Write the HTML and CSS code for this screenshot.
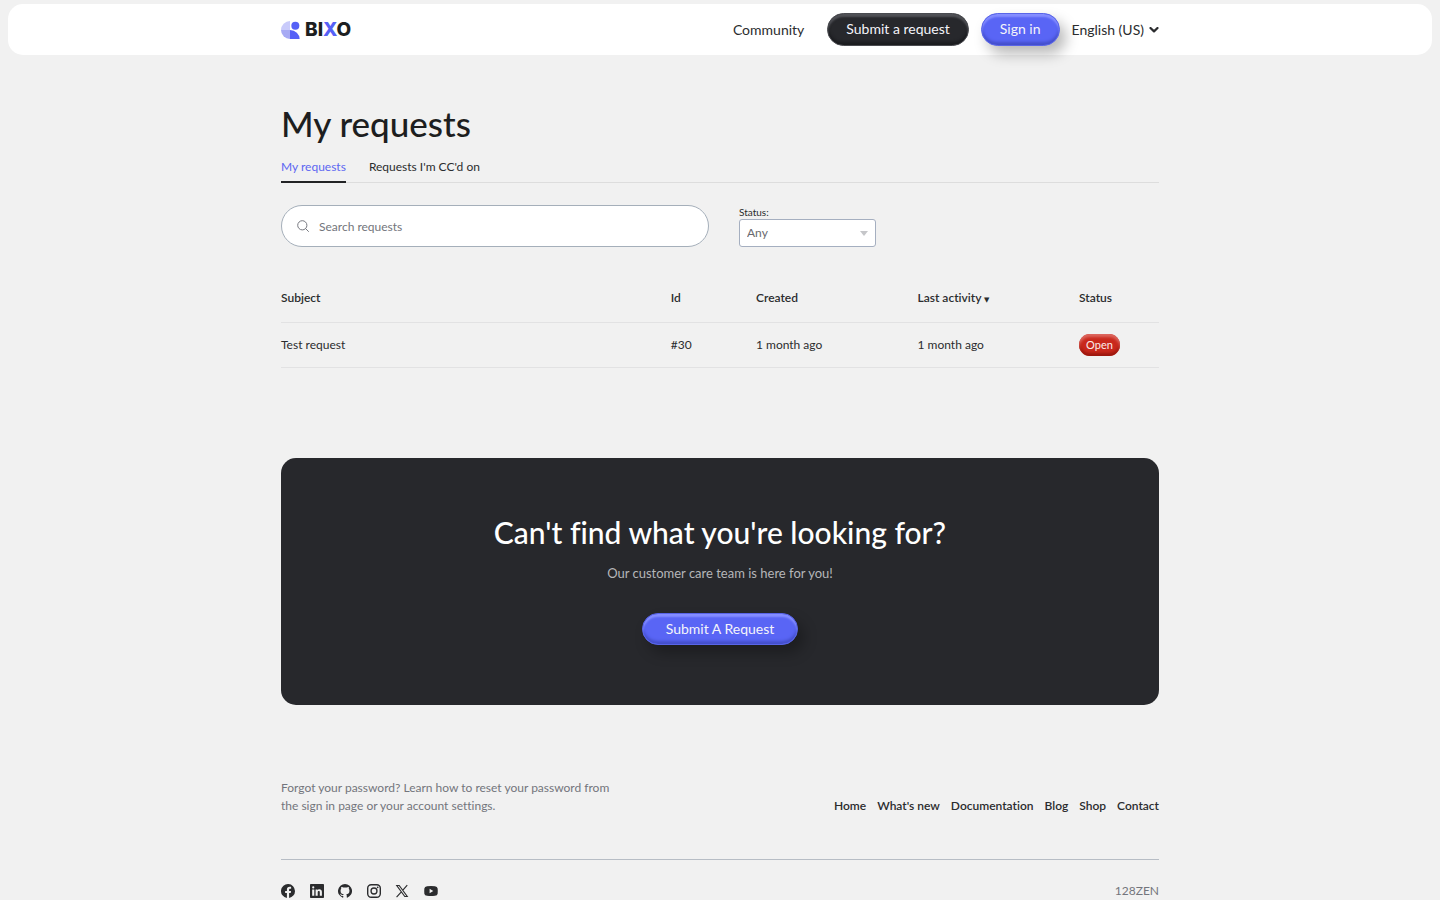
FILE: index.html
```html
<!DOCTYPE html>
<html lang="en-US">
<head>
<meta charset="utf-8">
<meta name="viewport" content="width=device-width, initial-scale=1">
<title>My requests – BIXO</title>
<link rel="stylesheet" href="styles.css">
</head>
<body>
<header class="header">
  <div class="container header-inner">
    <a class="logo" href="#" aria-label="BIXO home">
      <svg class="logo-mark" viewBox="0 0 57 54" aria-hidden="true">
        <path d="M27 0A27 27 0 0 0 0 27h27z" fill="#c9cbfb"/>
        <path d="M0 27A27 27 0 0 0 27 54V27z" fill="#a7aaf4"/>
        <path d="M27 27v27h29A29 27 0 0 0 27 27z" fill="#5661f6"/>
        <circle cx="43" cy="14" r="12" fill="#5661f6"/>
      </svg>
      <span class="logo-text">BI<span class="logo-accent">X</span>O</span>
    </a>
    <nav class="nav">
      <a class="nav-link" href="#">Community</a>
      <a class="button button-dark" href="#">Submit a request</a>
      <button class="button button-blue" type="button">Sign in</button>
      <button class="language" type="button">English (US)
        <svg class="chevron" viewBox="0 0 10 6" aria-hidden="true"><path d="M1.500 1L5 4.400 8.500 1" fill="none" stroke="currentColor" stroke-width="2.200" stroke-linecap="round" stroke-linejoin="round"/></svg>
      </button>
    </nav>
  </div>
</header>

<main class="container">
  <h1 class="page-title">My requests</h1>
  <nav class="tabs" aria-label="Requests">
    <a class="tab tab-current" href="#" aria-current="page">My requests</a>
    <a class="tab" href="#">Requests I'm CC'd on</a>
  </nav>

  <form class="filters">
    <div class="search">
      <svg class="search-icon" viewBox="0 0 12 12" aria-hidden="true"><circle cx="5.300" cy="5.300" r="4.600" fill="none" stroke="currentColor"/><path d="M8.600 8.600l2.900 2.900" stroke="currentColor" stroke-linecap="round"/></svg>
      <input class="search-input" type="search" placeholder="Search requests" aria-label="Search requests">
    </div>
    <div class="status-filter">
      <label class="status-label" for="status">Status:</label>
      <div class="select-wrap">
        <select class="select" id="status"><option>Any</option><option>Open</option><option>Solved</option></select>
        <svg class="select-arrow" viewBox="0 0 8 5" aria-hidden="true"><path d="M0 0h8L4 5z" fill="currentColor"/></svg>
      </div>
    </div>
  </form>

  <table class="requests">
    <thead>
      <tr>
        <th class="col-subject" scope="col">Subject</th>
        <th class="col-id" scope="col">Id</th>
        <th class="col-date" scope="col">Created</th>
        <th class="col-date" scope="col">Last activity <span class="sort">▼</span></th>
        <th scope="col">Status</th>
      </tr>
    </thead>
    <tbody>
      <tr>
        <td><a class="request-link" href="#">Test request</a></td>
        <td>#30</td>
        <td>1 month ago</td>
        <td>1 month ago</td>
        <td><span class="badge">Open</span></td>
      </tr>
    </tbody>
  </table>

  <section class="cta">
    <h2 class="cta-title">Can't find what you're looking for?</h2>
    <p class="cta-text">Our customer care team is here for you!</p>
    <a class="button button-blue button-wide" href="#">Submit A Request</a>
  </section>
</main>

<footer class="container footer">
  <div class="footer-top">
    <p class="footer-note">Forgot your password? Learn how to reset your password from the sign in page or your account settings.</p>
    <nav class="footer-links" aria-label="Footer">
      <a href="#">Home</a><a href="#">What's new</a><a href="#">Documentation</a><a href="#">Blog</a><a href="#">Shop</a><a href="#">Contact</a>
    </nav>
  </div>
  <div class="footer-bottom">
    <div class="social">
      <a href="#" aria-label="Facebook"><svg viewBox="0 0 16 16"><path fill="currentColor" d="M16 8.050a8 8 0 1 0-9.250 7.950v-5.620H4.720V8.050h2.030V6.280c0-2.020 1.200-3.130 3.020-3.130.88 0 1.790.16 1.790.16v1.980h-1c-1 0-1.310.62-1.310 1.260v1.500h2.220l-.35 2.330H9.250V16A8 8 0 0 0 16 8.050z"/></svg></a>
      <a href="#" aria-label="LinkedIn"><svg viewBox="0 0 16 16"><path fill="currentColor" fill-rule="evenodd" d="M1.150 0h13.700C15.500 0 16 .5 16 1.130v13.740c0 .63-.5 1.130-1.150 1.130H1.150C.5 16 0 15.500 0 14.870V1.130C0 .5.5 0 1.150 0zM2.500 6.200v7.200h2.400V6.200zM3.700 5.200a1.250 1.250 0 1 0 0-2.500 1.250 1.250 0 0 0 0 2.500zM6.400 6.200v7.200h2.400V9.400c0-.9.500-1.450 1.250-1.450.8 0 1.150.6 1.150 1.550v3.900h2.400V9.250c0-2.200-1.150-3.230-2.750-3.230-1.250 0-1.850.7-2.100 1.200V6.200z"/></svg></a>
      <a href="#" aria-label="GitHub"><svg viewBox="0 0 16 16"><path fill="currentColor" d="M8 0a8 8 0 0 0-2.530 15.590c.4.070.55-.17.55-.38v-1.490c-2.230.49-2.700-.95-2.700-.95-.36-.92-.88-1.170-.88-1.170-.73-.5.050-.49.050-.49.800.06 1.230.830 1.230.830.710 1.220 1.870.87 2.330.66.070-.52.280-.87.500-1.070-1.780-.2-3.640-.89-3.640-3.950 0-.87.310-1.590.820-2.150-.08-.2-.36-1.020.080-2.120 0 0 .67-.21 2.200.82a7.600 7.600 0 0 1 4 0c1.530-1.040 2.200-.82 2.200-.82.440 1.100.160 1.920.080 2.120.51.560.820 1.270.820 2.150 0 3.070-1.870 3.750-3.650 3.950.29.250.54.730.54 1.480v2.200c0 .21.150.46.550.38A8 8 0 0 0 8 0z"/></svg></a>
      <a href="#" aria-label="Instagram"><svg viewBox="0 0 16 16"><rect x=".8" y=".8" width="14.400" height="14.400" rx="4" fill="none" stroke="currentColor" stroke-width="1.600"/><circle cx="8" cy="8" r="3.400" fill="none" stroke="currentColor" stroke-width="1.500"/><circle cx="12.200" cy="3.800" r="1" fill="currentColor"/></svg></a>
      <a href="#" aria-label="X"><svg viewBox="0 0 16 16"><path fill="none" stroke="currentColor" stroke-width="1.300" d="M2 1.700h2.800l9.200 12.600h-2.800zM14 1.200L9 7M7 9.200L1.800 15"/></svg></a>
      <a href="#" aria-label="YouTube"><svg viewBox="0 0 16 16"><path fill="currentColor" fill-rule="evenodd" d="M3.500 2.500Q8 2 12.500 2.500 15.300 2.700 15.600 5q.3 3 0 6-.3 2.300-3.100 2.500-4.500.5-9 0Q.7 13.300.4 11q-.3-3 0-6 .3-2.300 3.100-2.500zM6.400 5.500v5L10.600 8z"/></svg></a>
    </div>
    <span class="brand">128ZEN</span>
  </div>
</footer>
</body>
</html>
```
FILE: styles.css
```css
* { box-sizing: border-box; }

body {
  margin: 0;
  padding: 4px 8px 0;
  background: #f1f1f1;
  color: #2b2c2e;
  font: 12px/18px Lato, "Open Sans", sans-serif;
  font-variant-ligatures: none;
}

a { color: inherit; text-decoration: none; }
button, input, select { font: inherit; color: inherit; }
h1, h2, p { margin: 0; }
svg { display: block; }

.container { width: 100%; max-width: 878px; margin: 0 auto; }

.header { background: #fff; border-radius: 15px; }
.header-inner {
  display: flex;
  align-items: center;
  justify-content: space-between;
  padding: 9px 0;
}
.logo { display: flex; align-items: center; gap: 5px; }
.logo-mark { width: 19px; height: 18px; }
.logo-text { color: #1d1e20; font: 800 19px/20px Inter, sans-serif; }
.logo-accent { color: #5661f6; }

.nav { display: flex; align-items: center; font-size: 14px; }
.nav-link { margin-right: 23px; }
.button {
  display: inline-block;
  padding: 6px 18px 7px;
  border: 1px solid;
  border-radius: 17px;
  color: #f4f4fa;
  font-size: 14px;
  line-height: 18px;
  text-align: center;
}
.button-dark {
  margin-right: 12px;
  background: #27282c;
  border-color: #4a4b50;
  box-shadow: inset 0 3px 2px #505156, inset 0 -3px 3px #1b1c1f;
}
.button-blue {
  background: #5965f5;
  border-color: #5965e8;
  box-shadow: inset 0 3px 2px #858eff, inset 0 -3px 3px #444fcb, 6px 8px 14px rgba(0, 0, 0, .28);
}
.button-wide { padding: 6px 23px; }
.language {
  display: flex;
  align-items: center;
  gap: 5px;
  margin-left: 12px;
  padding: 0;
  border: 0;
  background: none;
}
.chevron { width: 10px; height: 6px; }

.page-title {
  padding-top: 44px;
  color: #1d1e20;
  font-size: 35px;
  font-weight: 500;
  line-height: 48px;
}
.tabs { display: flex; gap: 23px; margin-top: 7px; border-bottom: 1px solid #ddd; }
.tab {
  margin-bottom: -1px;
  padding: 4px 0 5px;
  border-bottom: 2px solid transparent;
}
.tab-current { color: #5d67f2; border-color: #222325; }

.filters { display: flex; align-items: flex-end; gap: 30px; margin-top: 22px; }
.search { position: relative; flex: 0 1 428px; }
.search-icon {
  position: absolute;
  left: 16px;
  top: 15px;
  width: 12px;
  height: 12px;
  color: #777980;
}
.search-input {
  display: block;
  width: 100%;
  height: 42px;
  padding: 0 20px 0 37px;
  border: 1px solid #a5afba;
  border-radius: 21px;
  background: #fff;
}
.search-input::placeholder { color: #73757c; opacity: 1; }
.status-filter { flex: 0 1 137px; }
.status-label { display: block; font-size: 10px; line-height: 14px; }
.select-wrap { position: relative; }
.select {
  display: block;
  width: 100%;
  height: 28px;
  padding: 0 7px;
  appearance: none;
  border: 1px solid #a5afc0;
  border-radius: 3px;
  background: #fff;
  color: #68696e;
}
.select-arrow {
  position: absolute;
  right: 8px;
  top: 12px;
  width: 8px;
  height: 5px;
  color: #c5c6c9;
  pointer-events: none;
}

.requests {
  width: 100%;
  margin-top: 28px;
  border-collapse: collapse;
  table-layout: fixed;
  text-align: left;
}
.requests th { height: 47px; padding: 0; font-size: 12px; font-weight: 600; border-bottom: 1px solid #e2e2e3; }
.requests td { height: 45px; padding: 0; border-bottom: 1px solid #e2e2e3; }
.col-subject { width: 44.4%; }
.col-id { width: 9.7%; }
.col-date { width: 18.4%; }
.sort { font: 7px/8px "DejaVu Sans", sans-serif; }
.badge {
  display: inline-block;
  padding: 2px 7px 3px;
  border-radius: 11px;
  background: #c9281c;
  color: #fbeceb;
  font-size: 11px;
  line-height: 17px;
  box-shadow: inset 0 3px 3px #dd6860, inset 0 -3px 3px #9c170e;
}

.cta {
  margin-top: 90px;
  padding: 54px 24px 60px;
  border-radius: 15px;
  background: #27282c;
  color: #fff;
  text-align: center;
}
.cta-title { font-size: 30px; font-weight: 500; line-height: 40px; }
.cta-text { margin: 12px 0 31px; color: #b5b6b9; font-size: 13px; line-height: 18px; }

.footer { padding-top: 74px; }
.footer-top { display: flex; align-items: flex-end; justify-content: space-between; gap: 24px; }
.footer-note { max-width: 340px; color: #73757c; }
.footer-links { display: flex; gap: 11px; font-weight: 600; }
.footer-bottom {
  display: flex;
  align-items: center;
  justify-content: space-between;
  margin-top: 44px;
  padding-top: 22px;
  border-top: 1px solid #b7bdc5;
}
.social { display: flex; justify-content: space-between; width: 157px; }
.social svg { width: 14px; height: 14px; }
.brand { color: #73757c; }
```
